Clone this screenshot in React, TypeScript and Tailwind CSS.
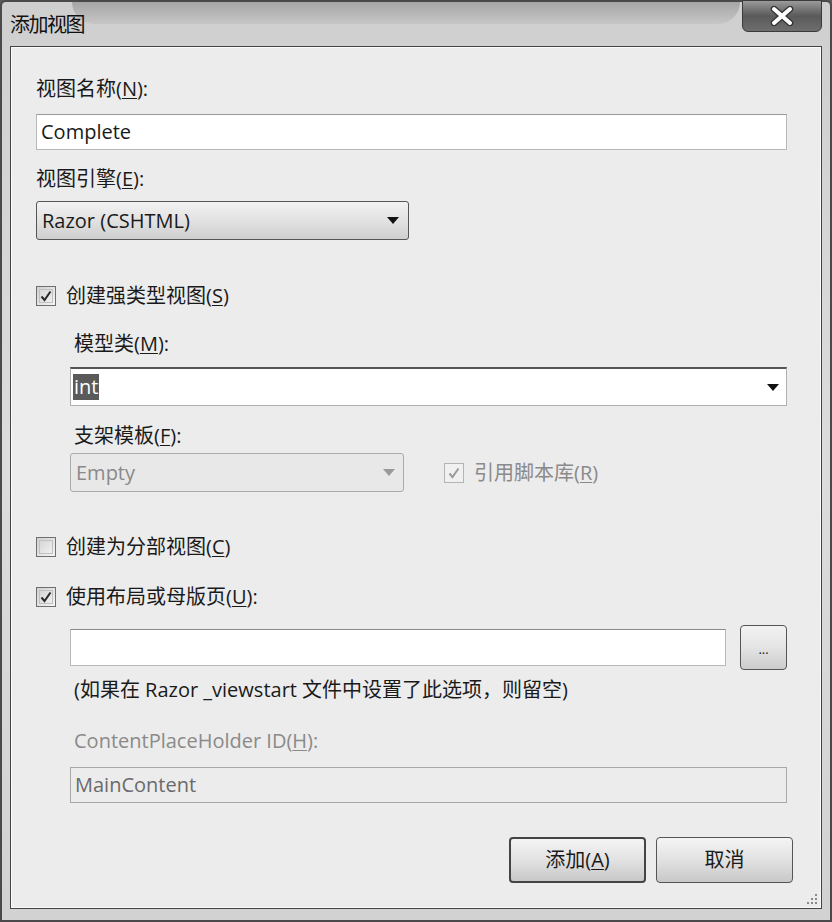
import React from "react";

const FONT = { fontFamily: '"Open Sans","Noto Sans CJK SC",sans-serif' };

function U({ c }: { c: string }) {
  return <span className="underline underline-offset-2 decoration-1">{c}</span>;
}

function Check({ checked, disabled }: { checked: boolean; disabled?: boolean }) {
  return (
    <div
      className={
        "w-[20px] h-[20px] border flex items-center justify-center shrink-0 " +
        (disabled ? "border-[#b4b4b4] bg-[#f0f0f0]" : "border-[#6e6e6e] bg-gradient-to-br from-[#d0d0d0] to-[#f6f6f6]")
      }
    >
      <div className={"w-[14px] h-[14px] flex items-center justify-center " + (disabled ? "" : "border border-[#c0c0c0]")}>
        {checked && (
          <svg width="12" height="12" viewBox="0 0 12 12">
            <path
              d="M1.5 6.5 L4.5 10 L10.5 1.5"
              fill="none"
              stroke={disabled ? "#9a9a9a" : "#2a2a2a"}
              strokeWidth="2"
            />
          </svg>
        )}
      </div>
    </div>
  );
}

function Arrow({ color }: { color: string }) {
  return (
    <svg width="12" height="7" viewBox="0 0 12 7">
      <path d="M0 0 L12 0 L6 7 Z" fill={color} />
    </svg>
  );
}

export default function App() {
  return (
    <div className="w-[832px] h-[922px] overflow-hidden bg-[#5a5a5a] p-0" style={FONT}>
      <div className="w-full h-full rounded-t-[6px] border-[2px] border-[#4a4a4a] bg-gradient-to-b from-[#cfcfcf] via-[#dcdcdc] to-[#d2d2d2] flex flex-col">
        {/* title bar */}
        <div className="relative h-[44px] shrink-0 flex items-center pl-[8px]">
          <div className="absolute left-[70px] right-[90px] top-[0px] h-[22px] bg-gradient-to-b from-[#9c9c9c] to-[#c4c4c4] rounded-b-[80px] opacity-80" />
          <span className="relative text-[20px] text-[#111] tracking-[-1.5px]" style={{ fontFamily: '"Noto Sans CJK SC",sans-serif' }}>
            添加视图
          </span>
          <div className="absolute right-[8px] top-[-2px] w-[80px] h-[32px] rounded-b-[6px] border border-[#3a3a3a] bg-gradient-to-b from-[#9a9a9a] via-[#5a5a5a] to-[#6e6e6e] flex items-center justify-center">
            <svg width="24" height="20" viewBox="0 0 24 20">
              <path d="M4 3 L20 17 M20 3 L4 17" stroke="#333" strokeWidth="6.5" strokeLinecap="round" />
              <path d="M4 3 L20 17 M20 3 L4 17" stroke="#fff" strokeWidth="4" strokeLinecap="round" />
            </svg>
          </div>
        </div>
        {/* content panel */}
        <div className="mx-[8px] mb-[11px] flex-1 border border-[#444] bg-[#ececec] relative">
          <div className="border border-[#fafafa] h-full pl-[24px] pr-[33px] pt-[29px] text-[20px] text-[#1a1a1a] flex flex-col">
            <div className="h-[24px] leading-[24px]">视图名称(<U c="N" />):</div>
            <div className="mt-[13px] h-[36px] bg-white border border-[#b8b8b8] border-t-[#9a9a9a] flex items-center pl-[4px]">
              Complete
            </div>
            <div className="mt-[17px] h-[24px] leading-[24px]">视图引擎(<U c="E" />):</div>
            <div className="mt-[10px] w-[373px] h-[39px] rounded-[3px] border border-[#555] bg-gradient-to-b from-[#f2f2f2] via-[#e2e2e2] to-[#cfcfcf] flex items-center pl-[5px] pr-[9px] justify-between">
              <span>Razor (CSHTML)</span>
              <Arrow color="#111" />
            </div>

            <div className="mt-[44px] h-[24px] flex items-center gap-[10px]">
              <Check checked />
              <span>创建强类型视图(<U c="S" />)</span>
            </div>

            <div className="pl-[34px] flex flex-col">
              <div className="mt-[24px] h-[24px] leading-[24px] pl-[4px]">模型类(<U c="M" />):</div>
              <div className="mt-[11px] h-[39px] bg-white border border-[#b0b0b0] border-t-[#555] border-t-[2px] flex items-center pl-[2px] pr-[7px] justify-between">
                <span className="bg-[#5a5a5a] text-white px-[1px] leading-[26px]">int</span>
                <Arrow color="#111" />
              </div>
              <div className="mt-[18px] h-[24px] leading-[24px] pl-[4px]">支架模板(<U c="F" />):</div>
              <div className="mt-[5px] flex items-center">
                <div className="w-[334px] h-[39px] rounded-[3px] border border-[#ababab] bg-[#e8e8e8] flex items-center pl-[5px] pr-[8px] justify-between text-[#8a8a8a]">
                  <span>Empty</span>
                  <Arrow color="#9a9a9a" />
                </div>
                <div className="ml-[40px] flex items-center gap-[10px] text-[#8a8a8a]">
                  <Check checked disabled />
                  <span>引用脚本库(<U c="R" />)</span>
                </div>
              </div>
            </div>

            <div className="mt-[43px] h-[24px] flex items-center gap-[10px]">
              <Check checked={false} />
              <span>创建为分部视图(<U c="C" />)</span>
            </div>
            <div className="mt-[26px] h-[24px] flex items-center gap-[10px]">
              <Check checked />
              <span>使用布局或母版页(<U c="U" />):</span>
            </div>

            <div className="pl-[34px] flex flex-col">
              <div className="mt-[16px] h-[45px] flex items-center gap-[14px]">
                <div className="flex-1 h-[37px] bg-white border border-[#b8b8b8] border-t-[#8a8a8a]" />
                <div className="w-[47px] h-[45px] rounded-[4px] border border-[#555] bg-gradient-to-b from-[#f2f2f2] via-[#e4e4e4] to-[#cccccc] flex items-center justify-center text-[13px] leading-none pt-[4px]">
                  ...
                </div>
              </div>
              <div className="mt-[8px] h-[24px] leading-[24px] pl-[4px]">(如果在 Razor _viewstart 文件中设置了此选项，则留空)</div>
              <div className="mt-[27px] h-[24px] leading-[24px] pl-[4px] text-[#8a8a8a]">
                ContentPlaceHolder ID(<U c="H" />):
              </div>
              <div className="mt-[14px] h-[36px] bg-[#ececec] border border-[#a8a8a8] flex items-center pl-[4px] text-[#6a6a6a]">
                MainContent
              </div>
            </div>

            <div className="mt-[34px] flex justify-end gap-[10px] mr-[-6px]">
              <div className="w-[137px] h-[46px] rounded-[4px] border-[2px] border-[#444] bg-gradient-to-b from-[#f4f4f4] via-[#e2e2e2] to-[#c8c8c8] flex items-center justify-center">
                添加(<U c="A" />)
              </div>
              <div className="w-[137px] h-[46px] rounded-[4px] border border-[#555] bg-gradient-to-b from-[#f4f4f4] via-[#e2e2e2] to-[#c8c8c8] flex items-center justify-center">
                取消
              </div>
            </div>
          </div>
          {/* grip */}
          <svg className="absolute right-[3px] bottom-[3px]" width="12" height="12" viewBox="0 0 12 12">
            {[
              [10, 2], [10, 6], [6, 6], [10, 10], [6, 10], [2, 10],
            ].map(([x, y], i) => (
              <rect key={i} x={x - 1} y={y - 1} width="2" height="2" fill="#8a8a8a" />
            ))}
          </svg>
        </div>
      </div>
    </div>
  );
}
